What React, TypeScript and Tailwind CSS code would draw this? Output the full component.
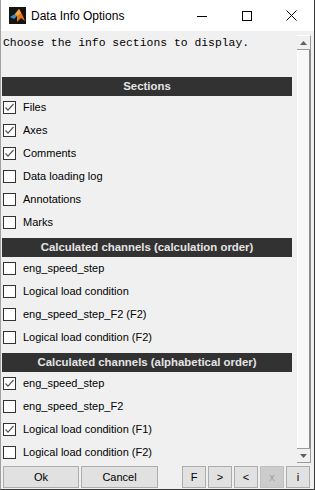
import React from "react";

type Item = [string, boolean];

const sections: { title: string; items: Item[] }[] = [
  {
    title: "Sections",
    items: [
      ["Files", true],
      ["Axes", true],
      ["Comments", true],
      ["Data loading log", false],
      ["Annotations", false],
      ["Marks", false],
    ],
  },
  {
    title: "Calculated channels (calculation order)",
    items: [
      ["eng_speed_step", false],
      ["Logical load condition", false],
      ["eng_speed_step_F2 (F2)", false],
      ["Logical load condition (F2)", false],
    ],
  },
  {
    title: "Calculated channels (alphabetical order)",
    items: [
      ["eng_speed_step", true],
      ["eng_speed_step_F2", false],
      ["Logical load condition (F1)", true],
      ["Logical load condition (F2)", false],
    ],
  },
];

const CheckRow = ({ label, checked }: { label: string; checked: boolean }) => (
  <div className="flex h-[23px] items-center gap-[7px] pl-[2px]">
    <span className="flex h-[13px] w-[13px] shrink-0 items-center justify-center border border-[#333333] bg-white">
      {checked && (
        <svg width="11" height="11" viewBox="0 0 11 11">
          <path d="M1.5 5.5 L4 8.2 L9.5 2" fill="none" stroke="#555555" strokeWidth="1.2" />
        </svg>
      )}
    </span>
    <span className="text-black">{label}</span>
  </div>
);

const SectionHeader = ({ title }: { title: string }) => (
  <div className="ml-[1px] flex h-[19px] w-[290px] items-center justify-center bg-[#323232] text-[11.4px] font-bold text-[#e4e4e4]">
    {title}
  </div>
);

const Btn = ({ children, w, disabled }: { children: React.ReactNode; w: string; disabled?: boolean }) => (
  <div
    className={
      disabled
        ? `flex h-[22px] ${w} items-center justify-center border border-[#bfbfbf] bg-[#cccccc] text-[#a0a0a0]`
        : `flex h-[22px] ${w} items-center justify-center border border-[#adadad] bg-[#e1e1e1] text-black`
    }
  >
    {children}
  </div>
);

const MatlabIcon = () => (
  <svg width="17" height="17" viewBox="0 0 17 17">
    <rect width="17" height="17" fill="#141414" />
    <path d="M1 10 L6 7 L8 9 L5 12 Z" fill="#3c8ec4" />
    <path d="M6 7 L10 2 L13 7 L16 14 L12 11 L8 15 L8 9 Z" fill="#e8741c" />
    <path d="M10 2 L12 6 L8 9 L6 7 Z" fill="#f4a640" />
  </svg>
);

export default function App() {
  return (
    <div className="flex h-[490px] w-[315px] flex-col border-x border-b border-l-[#a0a0a0] border-r-[#3a3a3a] border-b-[#3a3a3a] font-['Liberation_Sans',Arial,sans-serif] text-[11px]">
      {/* title bar */}
      <div className="flex h-[31px] shrink-0 items-center bg-white">
        <div className="ml-[8px]">
          <MatlabIcon />
        </div>
        <span className="ml-[5px] text-[12px] text-black">Data Info Options</span>
        <div className="flex-1" />
        <div className="flex h-full w-[45px] items-center justify-center">
          <svg width="10" height="10" viewBox="0 0 10 10">
            <path d="M0 5.5 H10" stroke="#000" strokeWidth="1" />
          </svg>
        </div>
        <div className="flex h-full w-[45px] items-center justify-center">
          <svg width="10" height="10" viewBox="0 0 10 10">
            <rect x="0.5" y="0.5" width="9" height="9" fill="none" stroke="#000" strokeWidth="1" />
          </svg>
        </div>
        <div className="flex h-full w-[45px] items-center justify-center">
          <svg width="11" height="11" viewBox="0 0 11 11">
            <path d="M0.5 0.5 L10.5 10.5 M10.5 0.5 L0.5 10.5" stroke="#000" strokeWidth="1" />
          </svg>
        </div>
      </div>

      {/* body */}
      <div className="flex flex-1 flex-col bg-[#f0f0f0]">
        <div className="flex h-[435px]">
          <div className="flex-1 overflow-hidden">
            <div className="h-[46px] pl-[2px] pt-[5px] font-['Liberation_Mono',monospace] text-[11.4px] leading-[14px] text-black">
              Choose the info sections to display.
            </div>
            {sections.map((s, i) => (
              <div key={s.title} className={i > 0 ? "mt-[4px]" : ""}>
                <SectionHeader title={s.title} />
                {s.items.map(([label, checked]) => (
                  <CheckRow key={label} label={label} checked={checked} />
                ))}
              </div>
            ))}
          </div>

          {/* scrollbar */}
          <div className="mb-[3px] mt-[4px] flex w-[14px] flex-col">
            <div className="flex h-[15px] items-center justify-center border-b border-r border-t border-b-[#9a9a9a] border-r-[#9a9a9a] border-t-white bg-[#f0f0f0]">
              <svg width="7" height="4" viewBox="0 0 7 4">
                <path d="M0 4 L3.5 0 L7 4 Z" fill="#606060" />
              </svg>
            </div>
            <div className="flex-1 border-l border-r-2 border-l-white border-r-[#8a8a8a] bg-[#f8f8f8]" />
            <div className="flex h-[15px] items-center justify-center border-b border-r border-t border-b-[#9a9a9a] border-r-[#9a9a9a] border-t-[#9a9a9a] bg-[#f0f0f0]">
              <svg width="7" height="4" viewBox="0 0 7 4">
                <path d="M0 0 L3.5 4 L7 0 Z" fill="#606060" />
              </svg>
            </div>
          </div>
          <div className="w-[3px]" />
        </div>

        {/* buttons */}
        <div className="flex items-center pl-[2px] pr-[4px]">
          <Btn w="w-[76px]">Ok</Btn>
          <div className="w-[2px]" />
          <Btn w="w-[77px]">Cancel</Btn>
          <div className="flex-1" />
          <div className="flex gap-[2px]">
            <Btn w="w-[24px]">F</Btn>
            <Btn w="w-[24px]">&gt;</Btn>
            <Btn w="w-[24px]">&lt;</Btn>
            <Btn w="w-[24px]" disabled>
              x
            </Btn>
            <Btn w="w-[24px]">i</Btn>
          </div>
        </div>
      </div>
    </div>
  );
}
